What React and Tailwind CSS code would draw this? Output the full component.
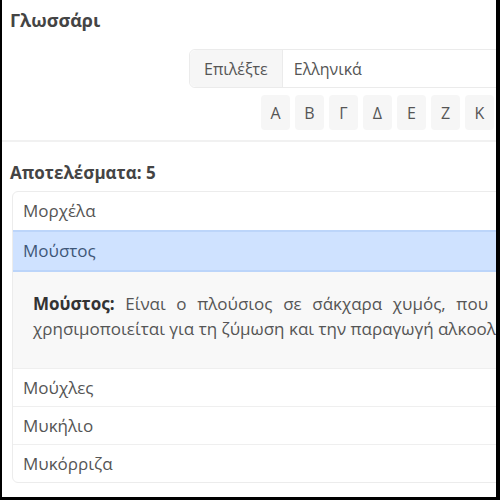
import { useState } from 'react';
import clsx from 'clsx';

const letters = ['Α', 'Β', 'Γ', 'Δ', 'Ε', 'Ζ', 'Κ', 'Λ', 'Μ', 'Ν', 'Ο', 'Π'];

const terms = [
    { key: 'morxela', label: 'Μορχέλα' },
    { key: 'moustos', label: 'Μούστος' },
    { key: 'mouxles', label: 'Μούχλες' },
    { key: 'mykilio', label: 'Μυκήλιο' },
    { key: 'mykorriza', label: 'Μυκόρριζα' },
];

export default function App() {
    const [open, setOpen] = useState('moustos');

    return (
        <div className="w-[500px] h-[500px] overflow-hidden bg-white border-l-2 border-r-4 border-b-[3px] border-black font-['Open_Sans',sans-serif]">
            <div className="w-[720px] pl-[8px] pt-[7px]">
                {/* title */}
                <h1 className="text-[18px] font-bold text-[#444] leading-[26px]">Γλωσσάρι</h1>

                {/* language picker */}
                <div className="flex ml-[179px] mt-[16px] h-[39px] w-[520px] rounded-md border border-[#ebebeb] text-[16px] text-[#555]">
                    <span className="flex items-center px-[14px] bg-[#f6f6f6] border-r border-[#ebebeb] rounded-l-md">Επιλέξτε</span>
                    <span className="flex items-center pl-[11px]">Ελληνικά</span>
                </div>

                {/* letters */}
                <div className="flex gap-[5px] ml-[251px] mt-[7px]">
                    {letters.map(l => (
                        <button key={l} type="button" className="w-[29px] h-[35px] rounded bg-[#f6f6f6] text-[16px] text-[#555] flex items-center justify-center">
                            {l}
                        </button>
                    ))}
                </div>

                <hr className="mt-[10px] -ml-[8px] border-t-2 border-[#f1f1f1]" />

                {/* results */}
                <h2 className="mt-[19px] text-[17px] font-bold text-[#444] leading-[24px]">Αποτελέσματα: 5</h2>

                <div className="mt-[6px] ml-[2px] rounded-md border border-[#ececec] overflow-hidden text-[17px]">
                    {terms.map((t, i) => (
                        <div key={t.key}>
                            <button
                                type="button"
                                onClick={() => setOpen(open === t.key ? null : t.key)}
                                className={clsx(
                                    'w-full text-left px-[10px] flex items-center',
                                    i > 0 && 'border-t',
                                    open === t.key
                                        ? 'h-[42px] bg-[#cfe2ff] border-t-2 border-b-2 border-[#bcd5fa] text-[#3e5778]'
                                        : 'h-[38px] border-[#efefef] text-[#555]'
                                )}
                            >
                                {t.label}
                            </button>

                            {open === t.key && (
                                <div className="bg-[#f8f8f8] h-[96px] pl-[20px] pt-[19px] text-[17px] text-[#555] leading-[25px]">
                                    <div className="w-[455px] text-justify [text-align-last:justify] whitespace-nowrap">
                                        <b className="text-[#333]">Μούστος:</b> Είναι ο πλούσιος σε σάκχαρα χυμός, που
                                    </div>
                                    <div className="whitespace-nowrap">
                                        χρησιμοποιείται για τη ζύμωση και την παραγωγή αλκοολούχων ποτών.
                                    </div>
                                </div>
                            )}
                        </div>
                    ))}
                </div>
            </div>
        </div>
    );
}
